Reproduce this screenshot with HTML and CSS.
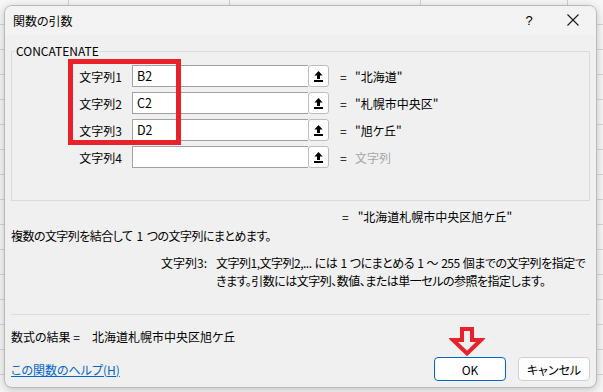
FILE: index.html
```html
<!DOCTYPE html>
<html lang="ja">
<head>
<meta charset="utf-8">
<title>関数の引数</title>
<link rel="stylesheet" href="styles.css">
</head>
<body>
<div class="dialog">
  <div class="titlebar">
    <span class="title">関数の引数</span>
    <span class="help">?</span>
    <span class="close"><svg width="12" height="12" viewBox="0 0 12 12"><path d="M0.5 0.5 L11.5 11.5 M11.5 0.5 L0.5 11.5" stroke="#1a1a1a" stroke-width="1.1" fill="none"/></svg></span>
  </div>
  <div class="content">
    <fieldset class="group">
      <legend>CONCATENATE</legend>
      <div class="args">
        <div class="lbl">文字列1</div>
        <div class="field"><div class="box">B2</div><div class="ref"><svg width="9" height="11" viewBox="0 0 9 11"><path d="M4.5 0 L8.6 4.4 H6 V8 H3 V4.4 H0.4 Z" fill="#000"/><rect x="0" y="9" width="9" height="2" fill="#000"/></svg></div></div>
        <div class="eq">=</div>
        <div class="val">"北海道"</div>

        <div class="lbl">文字列2</div>
        <div class="field"><div class="box">C2</div><div class="ref"><svg width="9" height="11" viewBox="0 0 9 11"><path d="M4.5 0 L8.6 4.4 H6 V8 H3 V4.4 H0.4 Z" fill="#000"/><rect x="0" y="9" width="9" height="2" fill="#000"/></svg></div></div>
        <div class="eq">=</div>
        <div class="val">"札幌市中央区"</div>

        <div class="lbl">文字列3</div>
        <div class="field"><div class="box">D2</div><div class="ref"><svg width="9" height="11" viewBox="0 0 9 11"><path d="M4.5 0 L8.6 4.4 H6 V8 H3 V4.4 H0.4 Z" fill="#000"/><rect x="0" y="9" width="9" height="2" fill="#000"/></svg></div></div>
        <div class="eq">=</div>
        <div class="val">"旭ケ丘"</div>

        <div class="lbl">文字列4</div>
        <div class="field"><div class="box"></div><div class="ref"><svg width="9" height="11" viewBox="0 0 9 11"><path d="M4.5 0 L8.6 4.4 H6 V8 H3 V4.4 H0.4 Z" fill="#000"/><rect x="0" y="9" width="9" height="2" fill="#000"/></svg></div></div>
        <div class="eq">=</div>
        <div class="val placeholder">文字列</div>

        <div class="highlight"></div>
      </div>
    </fieldset>

    <div class="result"><span class="eq">=</span><span>"北海道札幌市中央区旭ケ丘"</span></div>
    <div class="desc">複数の文字列を結合して 1 つの文字列にまとめます。</div>
    <div class="argdesc">
      <div class="argname">文字列3:</div>
      <div class="argtext">文字列1,文字列2,... には 1 つにまとめる 1 ～ 255 個までの文字列を指定で<br>きます。引数には文字列、数値、または単一セルの参照を指定します。</div>
    </div>
    <div class="sep"></div>
    <div class="formula"><span>数式の結果 =</span><span class="fval">北海道札幌市中央区旭ケ丘</span></div>
    <div class="footer">
      <a class="helplink" href="#">この関数のヘルプ(H)</a>
      <div class="buttons">
        <button class="btn ok">OK</button>
        <button class="btn">キャンセル</button>
        <svg class="pointer" width="36" height="31" viewBox="0 0 36 31"><path d="M13 3 H23 V14 H32 L18 27.5 L4 14 H13 Z" fill="none" stroke="#e8212b" stroke-width="4" stroke-linejoin="miter"/></svg>
      </div>
    </div>
  </div>
</div>
</body>
</html>
```

FILE: styles.css
```css
html, body {
  margin: 0;
  padding: 0;
}
body {
  width: 603px;
  height: 392px;
  overflow: hidden;
  background-color: #f7f7f7;
  background-image:
    linear-gradient(to right, transparent 68px, #cfcfcf 68px, #cfcfcf 69px, transparent 69px, transparent 229px, #cfcfcf 229px, #cfcfcf 230px, transparent 230px, transparent 420px, #cfcfcf 420px, #cfcfcf 421px, transparent 421px, transparent 567px, #cfcfcf 567px, #cfcfcf 568px, transparent 568px),
    repeating-linear-gradient(to bottom, transparent 0, transparent 24px, #d6d6d6 24px, #d6d6d6 25px);
  background-size: 603px 6px, 603px 392px;
  background-repeat: no-repeat, repeat;
  font-family: "Noto Sans CJK JP", sans-serif;
  font-size: 12px;
  color: #000;
  padding: 5px 0 0 4px;
  box-sizing: border-box;
}
.dialog {
  width: 593px;
  height: 383px;
  box-sizing: border-box;
  border: 1px solid #b9b9b9;
  border-radius: 8px;
  background: #f0f0f0;
  box-shadow: 0 2px 10px rgba(0,0,0,0.22);
  overflow: hidden;
  display: flex;
  flex-direction: column;
  font-feature-settings: "palt";
}
.titlebar {
  height: 29px;
  flex: none;
  background: #f3f3f3;
  display: flex;
  align-items: center;
  padding-left: 8px;
}
.title {
  flex: 1;
  font-size: 12px;
}
.help {
  width: 12px;
  text-align: center;
  font-family: "Liberation Sans", sans-serif;
  font-size: 13px;
  margin-right: 32px;
}
.close {
  width: 12px;
  height: 12px;
  display: flex;
  margin-right: 17px;
  margin-top: -1px;
}
.content {
  flex: 1;
  display: flex;
  flex-direction: column;
  padding: 0 6px;
}
.group {
  margin: 8px 0 0 0;
  padding: 6px 0 32px 0;
  border: 1px solid #dadada;
  min-width: 0;
}
.group legend {
  padding: 0 1px;
  margin-left: 3px;
  line-height: 16px;
  font-size: 12px;
}
.args {
  position: relative;
  display: grid;
  grid-template-columns: 110px 197px 26px 1fr;
  column-gap: 10px;
  row-gap: 5px;
  align-items: center;
}
.args .eq {
  padding-left: 1px;
}
.lbl {
  text-align: right;
  font-size: 12px;
}
.field {
  height: 22px;
  display: flex;
}
.box {
  flex: 1;
  background: #fff;
  border: 1px solid #a2a2a2;
  border-right: none;
  padding-left: 4px;
  line-height: 20px;
  font-size: 12.5px;
}
.ref {
  width: 21px;
  height: 22px;
  box-sizing: border-box;
  background: #fff;
  border: 1px solid #bdbdbd;
  border-radius: 3px;
  display: flex;
  align-items: center;
  justify-content: center;
}
.val {
  margin-left: -20px;
}
.placeholder {
  color: #a6a6a6;
}
.highlight {
  position: absolute;
  left: 56px;
  top: -6px;
  width: 113px;
  height: 86px;
  box-sizing: border-box;
  border: 5px solid #e8212b;
}
.result {
  margin-top: 8px;
  margin-left: 331px;
  line-height: 16px;
  display: flex;
  gap: 9px;
}
.desc {
  margin-top: 3px;
  line-height: 16px;
  letter-spacing: -0.55px;
  word-spacing: 2px;
}
.argdesc {
  margin-top: 10px;
  display: flex;
  line-height: 18px;
  white-space: nowrap;
}
.argname {
  width: 205px;
  flex: none;
  box-sizing: border-box;
  padding-left: 150px;
}
.argtext {
  letter-spacing: -0.5px;
  word-spacing: 1px;
}
.sep {
  margin-top: 24px;
  height: 1px;
  background: #dcdcdc;
}
.formula {
  margin-top: 14px;
  line-height: 16px;
  display: flex;
}
.fval {
  margin-left: 12px;
}
.footer {
  margin-top: 12px;
  display: flex;
  align-items: center;
  justify-content: space-between;
}
.helplink {
  color: #0066cc;
  text-decoration: underline;
  font-size: 12px;
}
.buttons {
  position: relative;
  display: flex;
  gap: 12px;
}
.btn {
  width: 72px;
  height: 24px;
  box-sizing: border-box;
  border: 1px solid #d0d0d0;
  border-radius: 4px;
  background: #fdfdfd;
  font-family: "Noto Sans CJK JP", sans-serif;
  font-size: 12px;
  font-feature-settings: "palt";
  color: #000;
  padding: 0;
}
.btn.ok {
  border-color: #0067c0;
  background: #ffffff;
}
.pointer {
  position: absolute;
  left: 15px;
  top: -31px;
}
```
